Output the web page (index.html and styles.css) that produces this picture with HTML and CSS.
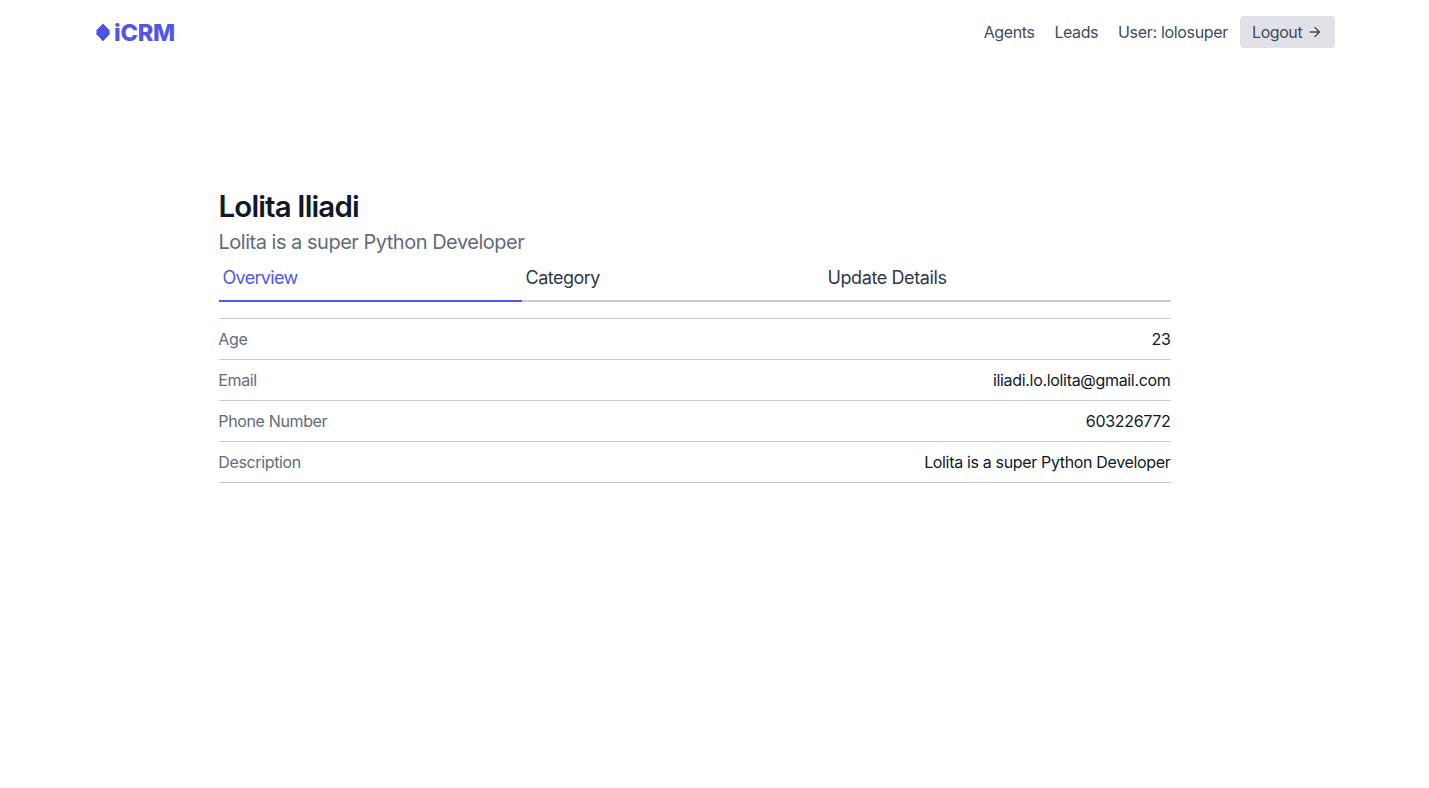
FILE: index.html
```html
<!DOCTYPE html>
<html lang="en">
<head>
<meta charset="utf-8">
<title>iCRM</title>
<link rel="stylesheet" href="styles.css">
</head>
<body>
<header class="header">
  <a class="logo">
    <svg class="logo-mark" width="16" height="20" viewBox="0 0 16 20"><path d="M8 1.500 15 8.700l-1 1.300 1 1.500-7 7.500-7-7.500 1-1.500-1-1.300z" fill="#4f55e2"/><path d="M1 11.500 2.500 10 8 15.500 13.500 10 15 11.500l-7 7.500z" fill="#474ecf"/></svg>
    <span class="logo-text">iCRM</span>
  </a>
  <nav class="nav">
    <a class="agents">Agents</a>
    <a class="leads">Leads</a>
    <a class="user">User: lolosuper</a>
  </nav>
  <button class="logout"><span>Logout</span>
    <svg width="16" height="16" viewBox="0 0 24 24" fill="none" stroke="currentColor" stroke-width="2" stroke-linecap="round" stroke-linejoin="round"><path d="M5 12h14M12 5l7 7-7 7"/></svg>
  </button>
</header>
<main class="lead">
  <h1 class="name">Lolita Iliadi</h1>
  <h2 class="subtitle">Lolita is a super Python Developer</h2>
  <div class="tabs">
    <a class="tab active">Overview</a>
    <a class="tab">Category</a>
    <a class="tab update">Update Details</a>
  </div>
  <div class="details">
    <div class="row"><span class="label">Age</span><span class="value">23</span></div>
    <div class="row"><span class="label">Email</span><span class="value">iliadi.lo.lolita@gmail.com</span></div>
    <div class="row"><span class="label">Phone Number</span><span class="value">603226772</span></div>
    <div class="row"><span class="label">Description</span><span class="value description">Lolita is a super Python Developer</span></div>
  </div>
</main>
</body>
</html>
```
FILE: styles.css
```css
* { box-sizing: border-box; margin: 0; padding: 0; }
body { font: 16px/24px Inter, sans-serif; letter-spacing: -0.3px; color: #111827; background: #fff; }
.header { display: flex; align-items: center; height: 64px; padding: 0 94px 0 95px; color: #414b5a; }
.logo { display: flex; align-items: center; }
.logo-text { font-size: 23.5px; line-height: 32px; font-weight: 800; letter-spacing: -0.25px; color: #5156e8; margin: 1px 0 0 3px; }
.nav { display: flex; gap: 20px; margin-left: auto; }
.agents { letter-spacing: -0.4px; }
.leads { letter-spacing: -0.45px; }
.user { letter-spacing: -0.32px; }
.logout { display: flex; align-items: center; gap: 5px; height: 32px; width: 95px; margin-left: 12px; padding: 0 12px; border: 0; border-radius: 4px; background: #e1e2e7; color: #414b5a; font: inherit; letter-spacing: -0.42px; }
.lead { width: 952px; margin: 124px 0 0 219px; }
.name { font-size: 29.5px; line-height: 36px; font-weight: 600; letter-spacing: -0.88px; text-indent: -0.5px; }
.subtitle { font-size: 20px; line-height: 28px; font-weight: 400; color: #636b79; margin-top: 4px; letter-spacing: -0.49px; text-indent: -0.5px; }
.tabs { display: grid; grid-template-columns: 303px 302px 1fr; margin-bottom: 16px; }
.tab { height: 46px; padding: 8px 4px; font-size: 18px; line-height: 28px; letter-spacing: -0.5px; border-bottom: 2px solid #c9cdd3; color: #303947; text-indent: -0.5px; }
.update { letter-spacing: -0.4px; }
.active { color: #5158e8; border-color: #5158e8; letter-spacing: -0.68px; }
.row { display: flex; justify-content: space-between; border-top: 1px solid #c9cdd3; padding: 8px 0; }
.row:last-child { border-bottom: 1px solid #c9cdd3; }
.label { color: #636b79; letter-spacing: -0.36px; text-indent: -0.7px; }
.value { padding-right: 0.5px; letter-spacing: -0.32px; }
.description { letter-spacing: -0.34px; }
```
